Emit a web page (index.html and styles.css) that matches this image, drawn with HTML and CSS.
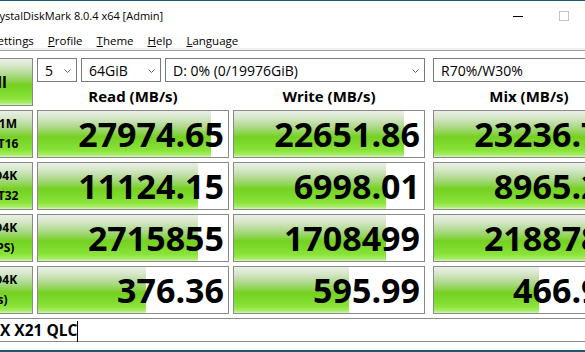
FILE: index.html
```html
<!DOCTYPE html>
<html lang="en">

<head>
    <meta charset="UTF-8">
    <title>CrystalDiskMark 8.0.4 x64 [Admin]</title>
    <link rel="stylesheet" href="styles.css">
</head>

<body>

    <div class="window">

        <div class="titlebar">
            <span class="title">CrystalDiskMark 8.0.4 x64 [Admin]</span>
            <span class="caption-btn"><span class="min-glyph"></span></span>
            <span class="caption-btn"><span class="max-glyph"></span></span>
            <span class="caption-btn">
                <svg width="10" height="10" viewBox="0 0 10 10"><path d="M0 0L10 10M10 0L0 10" stroke="#000" stroke-width="1"/></svg>
            </span>
        </div>

        <div class="menubar">
            <span class="menu-item"><u>F</u>ile</span>
            <span class="menu-item"><u>S</u>ettings</span>
            <span class="menu-item"><u>P</u>rofile</span>
            <span class="menu-item"><u>T</u>heme</span>
            <span class="menu-item"><u>H</u>elp</span>
            <span class="menu-item"><u>L</u>anguage</span>
        </div>
        <div class="menu-sep"></div>

        <div class="board">
            <div class="all-btn">All</div>

            <div class="combo-row">
                <div class="combo combo-count">5 <svg class="chev" width="7" height="4"><polyline points="0.5,0.5 3.5,3.5 6.5,0.5"/></svg></div>
                <div class="combo combo-size">64GiB <svg class="chev" width="7" height="4"><polyline points="0.5,0.5 3.5,3.5 6.5,0.5"/></svg></div>
                <div class="combo combo-drive">D: 0% (0/19976GiB) <svg class="chev" width="7" height="4"><polyline points="0.5,0.5 3.5,3.5 6.5,0.5"/></svg></div>
                <div class="combo combo-mix">R70%/W30% <svg class="chev" width="7" height="4"><polyline points="0.5,0.5 3.5,3.5 6.5,0.5"/></svg></div>
            </div>

            <div class="col-head">Read (MB/s)</div>
            <div class="col-head">Write (MB/s)</div>
            <div class="col-head col-mix">Mix (MB/s)</div>

            <!-- row 1 -->
            <div class="test-label"><span>SEQ1M</span><span>Q32T16</span></div>
            <div class="result" style="--fill: 91.1%">27974.65</div>
            <div class="result" style="--fill: 89.5%">22651.86</div>
            <div class="result col-mix" style="--fill: 89.5%">23236.78</div>

            <!-- row 2 -->
            <div class="test-label"><span>RND4K</span><span>Q32T32</span></div>
            <div class="result" style="--fill: 84.2%">11124.15</div>
            <div class="result" style="--fill: 80%">6998.01</div>
            <div class="result col-mix" style="--fill: 82%">8965.24</div>

            <!-- row 3 -->
            <div class="test-label"><span>RND4K</span><span>(IOPS)</span></div>
            <div class="result" style="--fill: 84.2%">2715855</div>
            <div class="result" style="--fill: 80%">1708499</div>
            <div class="result col-mix" style="--fill: 82%">2188780</div>

            <!-- row 4 -->
            <div class="test-label"><span>RND4K</span><span>(μs)</span></div>
            <div class="result" style="--fill: 56.8%">376.36</div>
            <div class="result" style="--fill: 60.5%">595.99</div>
            <div class="result col-mix" style="--fill: 55.3%">466.93</div>

            <div class="comment">X X21 QLC<span class="caret"></span></div>
        </div>

    </div>

</body>

</html>
```

FILE: styles.css
```css
html,
body {
    margin: 0;
    padding: 0;
    overflow: hidden;
    background-color: #fff;
}

body {
    font-family: "Open Sans", "Noto Sans", sans-serif;
    color: #000;
}

/* window is dragged partly off the left of the screen */
.window {
    width: 681px;
    height: 352px;
    margin-left: -48px;
    box-sizing: border-box;
    border-top: 1px solid #1f5877;
    border-bottom: 2px solid #1f5877;
    background-color: #fff;
}

.titlebar {
    display: flex;
    height: 30px;
}

.title {
    flex-grow: 1;
    padding-left: 36px;
    font-size: 11px;
    line-height: 30px;
}

.caption-btn {
    width: 46px;
    display: flex;
    align-items: center;
    justify-content: center;
}

.min-glyph {
    width: 10px;
    height: 1px;
    background-color: #000;
}

.max-glyph {
    width: 10px;
    height: 10px;
    box-sizing: border-box;
    border: 1px solid #c4c4c4;
}

.menubar {
    display: flex;
    height: 17px;
    box-sizing: border-box;
    padding-top: 2px;
    font-size: 11.5px;
    line-height: 15px;
}

.menu-item {
    padding: 0 7px;
}

.menu-sep {
    height: 2px;
    background-color: #f0f0f0;
    border-bottom: 1px solid #a0a0a0;
}

.board {
    display: grid;
    grid-template-columns: 73px 192px 192px 196px;
    grid-template-rows: 24px 20px repeat(4, 48px) 24px;
    gap: 4px;
    padding: 7px 8px 0 8px;
}

.all-btn,
.test-label {
    box-sizing: border-box;
    border: 1px solid #8a8a8a;
    background: linear-gradient(to bottom, #eaf0e6 0%, #d4e6c6 16%, #aad884 36%, #8cd44c 48%, #76d022 56%, #7cd92c 70%, #8ae43a 86%, #a8ec68 95%, #d6f4bc 100%);
    font-weight: bold;
}

.all-btn {
    grid-row: span 2;
    display: flex;
    align-items: center;
    justify-content: center;
    font-size: 16px;
}

.test-label {
    display: flex;
    flex-direction: column;
    justify-content: center;
    align-items: center;
    font-size: 12px;
    line-height: 20px;
}

.combo-row {
    grid-column: span 3;
    display: flex;
    gap: 4px;
}

.combo {
    display: flex;
    align-items: center;
    justify-content: space-between;
    box-sizing: border-box;
    border: 1px solid #7a7a7a;
    padding: 1px 5px 0 7px;
    font-size: 14px;
}

.combo-count { width: 40px; }
.combo-size { width: 80px; }
.combo-drive { width: 260px; }
.combo-mix { width: 192px; margin-left: 4px; }

.chev {
    fill: none;
    stroke: #606060;
    stroke-width: 1;
}

.col-head {
    text-align: center;
    font-size: 15px;
    font-weight: bold;
    line-height: 20px;
}

.col-mix {
    margin-left: 4px;
}

.result {
    box-sizing: border-box;
    border: 1px solid #8a8a8a;
    padding-right: 4px;
    background-color: #fff;
    background-image: linear-gradient(to bottom, #eaf0e6 0%, #d4e6c6 16%, #aad884 36%, #8cd44c 48%, #76d022 56%, #7cd92c 70%, #8ae43a 86%, #a8ec68 95%, #d6f4bc 100%);
    background-repeat: no-repeat;
    background-size: var(--fill) 100%;
    text-align: right;
    font-size: 34px;
    font-weight: bold;
    line-height: 46px;
    white-space: nowrap;
    overflow: hidden;
}

.comment {
    grid-column: 1 / -1;
    box-sizing: border-box;
    border: 1px solid #8a8a8a;
    padding-left: 39px;
    font-size: 15.5px;
    font-weight: bold;
    line-height: 22px;
}

.caret {
    display: inline-block;
    width: 1px;
    height: 21px;
    background-color: #000;
    vertical-align: middle;
}
```
